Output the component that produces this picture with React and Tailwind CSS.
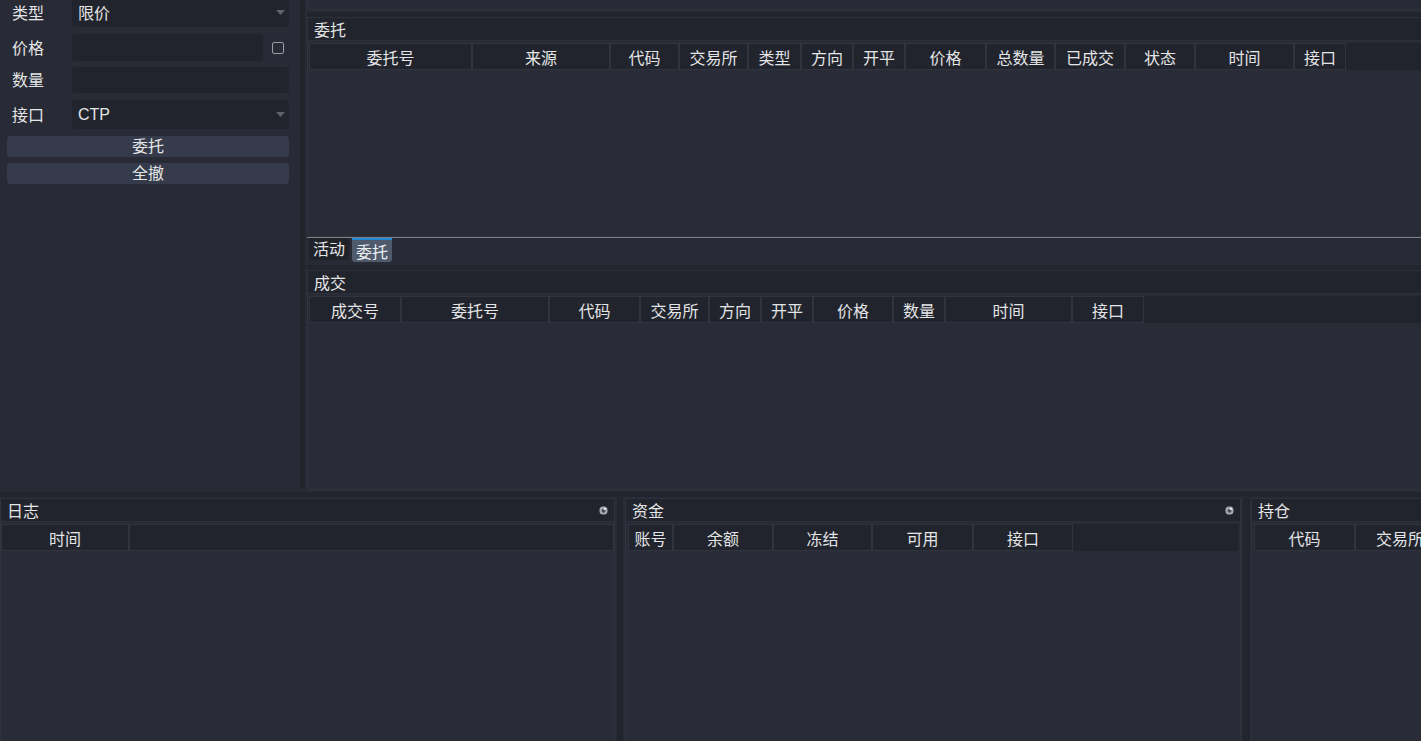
const ORDER_COLS = [
  ["委托号", 163],
  ["来源", 138],
  ["代码", 69],
  ["交易所", 69],
  ["类型", 53],
  ["方向", 52],
  ["开平", 52],
  ["价格", 81],
  ["总数量", 69],
  ["已成交", 70],
  ["状态", 70],
  ["时间", 99],
  ["接口", 52],
];

const TRADE_COLS = [
  ["成交号", 92],
  ["委托号", 148],
  ["代码", 91],
  ["交易所", 69],
  ["方向", 52],
  ["开平", 52],
  ["价格", 80],
  ["数量", 52],
  ["时间", 127],
  ["接口", 72],
];

const ACCOUNT_COLS = [
  ["账号", 45],
  ["余额", 100],
  ["冻结", 99],
  ["可用", 101],
  ["接口", 100],
];

const POSITION_COLS = [
  ["代码", 101],
  ["交易所", 90],
];

const FONT = { fontFamily: '"Noto Sans CJK SC", "Liberation Sans", sans-serif' };

const FloatIcon = () => (
  <svg width="9" height="9" viewBox="0 0 9 9" className="shrink-0">
    <rect x="0.5" y="0.5" width="8" height="8" rx="3.5" fill="#a9acb2" />
    <circle cx="4.5" cy="4.8" r="2" fill="#4a4d55" />
    <circle cx="5.8" cy="2.9" r="1.2" fill="#e4e5e8" />
  </svg>
);

const Arrow = () => (
  <svg width="9" height="5" viewBox="0 0 9 5" className="shrink-0">
    <path d="M0 0h9L4.5 5z" fill="#5f636c" />
  </svg>
);

// stretch: "none" | "outlined" | "plain"
const HeaderRow = ({ cols, stretch = "plain" }) => (
  <div className="flex h-[27px] bg-[#21242c] shrink-0">
    {cols.map(([label, w], i) => (
      <div
        key={label + i}
        style={{ width: w }}
        className="shrink-0 h-full border border-[#30343f] flex items-center justify-center text-[16px] text-[#e4e5e7]"
      >
        {label}
      </div>
    ))}
    {stretch === "outlined" && <div className="flex-1 h-full border border-[#30343f]"></div>}
    {stretch === "plain" && <div className="flex-1 h-full"></div>}
  </div>
);

const DockTitle = ({ title, floatBtn = false }) => (
  <div className="h-[24px] shrink-0 bg-[#21242c] border-y border-[#2c303b] flex items-center justify-between pl-[6px] pr-[6px]">
    <span className="text-[16px] text-[#e4e5e7] leading-none pb-[1px]">{title}</span>
    {floatBtn && <FloatIcon />}
  </div>
);

const Field = ({ label, children }) => (
  <div className="flex items-center">
    <span className="w-[65px] pl-[5px] pb-[2px] text-[16px] text-[#e4e5e7]">{label}</span>
    {children}
  </div>
);

const LeftPanel = () => (
  <div className="w-[300px] shrink-0 pl-[7px] pr-[11px] flex flex-col">
    <div className="-mt-[2px]">
      <Field label="类型">
        <div className="flex-1 h-[29px] bg-[#21242c] rounded-[4px] flex items-center justify-between pl-[6px] pr-[4px]">
          <span className="text-[16px] text-[#e4e5e7] pb-[2px]">限价</span>
          <Arrow />
        </div>
      </Field>
    </div>
    <div className="mt-[7px]">
      <Field label="价格">
        <div className="w-[191px] h-[27px] bg-[#21242c] rounded-[4px]"></div>
        <div className="ml-[9px] w-[12px] h-[12px] rounded-[2px] border-[1.5px] border-[#9a9da3]"></div>
      </Field>
    </div>
    <div className="mt-[6px]">
      <Field label="数量">
        <div className="flex-1 h-[26px] bg-[#21242c] rounded-[4px]"></div>
      </Field>
    </div>
    <div className="mt-[7px]">
      <Field label="接口">
        <div className="flex-1 h-[29px] bg-[#21242c] rounded-[4px] flex items-center justify-between pl-[6px] pr-[4px]">
          <span className="text-[16px] text-[#e4e5e7]" style={{ fontFamily: '"Liberation Sans", sans-serif' }}>
            CTP
          </span>
          <Arrow />
        </div>
      </Field>
    </div>
    <button className="mt-[7px] h-[21px] bg-[#353b4a] rounded-[4px] text-[16px] leading-none pb-[3px] text-[#e4e5e7]">委托</button>
    <button className="mt-[6px] h-[21px] bg-[#353b4a] rounded-[4px] text-[16px] leading-none pb-[3px] text-[#e4e5e7]">全撤</button>
  </div>
);

const RightDock = ({ title, cols }) => (
  <div className="h-[220px] shrink-0 flex flex-col border-l border-b border-[#2f333e] rounded-bl-[4px]">
    <DockTitle title={title} />
    <div className="mt-[2px] pl-[1px]">
      <HeaderRow cols={cols} stretch="plain" />
    </div>
    <div className="flex-1 bg-[#292c37]"></div>
  </div>
);

const BottomDock = ({ title, cols, width, pad = 3, floatBtn = true, stretch = "plain" }) => (
  <div
    style={{ width }}
    className="shrink-0 h-full flex flex-col border-x border-[#2f333e] overflow-hidden"
  >
    <DockTitle title={title} floatBtn={floatBtn} />
    <div className="mt-[2px]" style={{ paddingLeft: pad, paddingRight: pad }}>
      <HeaderRow cols={cols} stretch={stretch} />
    </div>
    <div className="flex-1 bg-[#292c37]"></div>
  </div>
);

export default function App() {
  return (
    <div
      className="w-[1421px] h-[741px] bg-[#282b36] overflow-hidden flex flex-col select-none"
      style={FONT}
    >
      {/* upper area */}
      <div className="h-[490px] shrink-0 flex">
        <LeftPanel />
        <div className="w-[5px] shrink-0 bg-[#21242b] h-[489px]"></div>
        <div className="flex-1 min-w-0 flex flex-col pl-[2px]">
          <div className="h-[10px] shrink-0 border-l border-b border-[#30343f] rounded-bl-[3px]"></div>
          <div className="h-[2px] shrink-0"></div>
          <div className="h-[5px] shrink-0 bg-[#22252d]"></div>
          <RightDock title="委托" cols={ORDER_COLS} />
          <div className="h-[1px] shrink-0 bg-[#7d8087]"></div>
          <div className="h-[25px] shrink-0 flex items-start gap-[3px] pl-[2px]">
            <div className="h-[22px] px-[4px] pb-[2px] bg-[#1f2229] rounded-b-[3px] flex items-center text-[16px] text-[#e4e5e7]">
              活动
            </div>
            <div className="h-[24px] w-[40px] bg-[#4f5b6d] border-t-[2px] border-[#2288d8] rounded-b-[3px] flex items-center justify-center text-[16px] text-[#eef0f3]">
              委托
            </div>
          </div>
          <div className="h-[2px] shrink-0"></div>
          <div className="h-[5px] shrink-0 bg-[#22252d]"></div>
          <RightDock title="成交" cols={TRADE_COLS} />
        </div>
      </div>

      {/* horizontal splitter */}
      <div className="h-[8px] shrink-0 flex flex-col justify-center">
        <div className="h-[5px] bg-[#22252d]"></div>
      </div>

      {/* bottom docks */}
      <div className="flex-1 min-h-0 flex">
        <BottomDock title="日志" cols={[["时间", 128]]} width={615} pad={0} stretch="outlined" />
        <div className="w-[10px] shrink-0 flex justify-center">
          <div className="w-[6px] bg-[#22252d]"></div>
        </div>
        <BottomDock title="资金" cols={ACCOUNT_COLS} width={616} pad={2} />
        <div className="w-[10px] shrink-0 flex justify-center">
          <div className="w-[7px] bg-[#22252d]"></div>
        </div>
        <BottomDock title="持仓" cols={POSITION_COLS} width={200} pad={2} floatBtn={false} stretch="none" />
      </div>
    </div>
  );
}
